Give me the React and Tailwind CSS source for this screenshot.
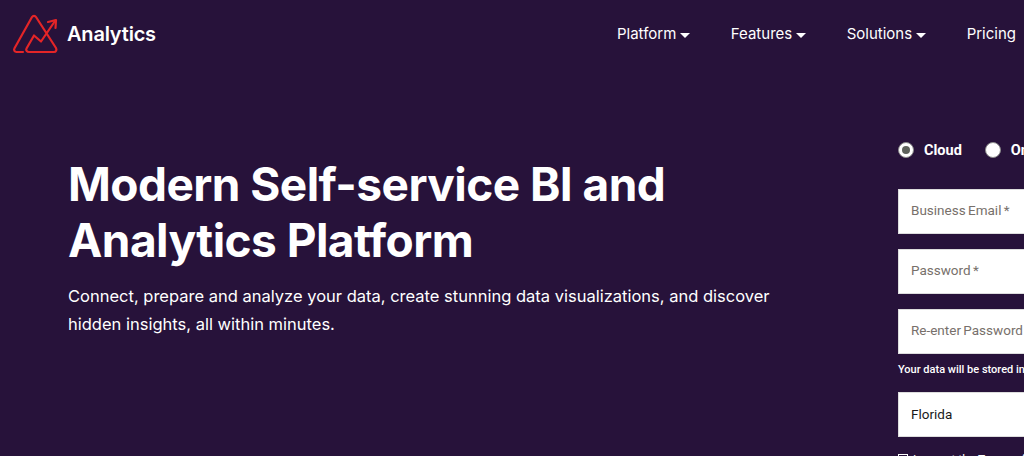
import React from 'react';

const navItems = [
    { label: 'Platform', caret: true },
    { label: 'Features', caret: true },
    { label: 'Solutions', caret: true },
    { label: 'Pricing', caret: false }
];

const Logo = () => (
    <svg width="46" height="44" viewBox="12 12 46 44" fill="none" stroke="#e42527" strokeWidth="2.2" strokeLinecap="round" strokeLinejoin="round" className="shrink-0">
        <path d="M23 52 H16.500 C14.500 52 13.500 50 14.500 48.300 L32 17 C33 15.400 35 15.400 36 17 L56 48 C57 50 56 52 54 52 H29 C27 52 25.500 50.300 26.500 48.500 L34 35.500 L41 41.500 L55 21" />
        <path d="M48 22 L56 20 L55.500 28" />
    </svg>
);

const Field = ({ placeholder, value }) => (
    <div className={`w-[200px] h-[45px] bg-white border border-[#ddd] flex items-center pl-[12px] text-[13.5px] whitespace-nowrap font-['Roboto',sans-serif] ${value ? 'text-[#1a1a1a]' : 'text-[#77706b] pb-[2px] [word-spacing:-1px]'}`}>
        {value || placeholder}
    </div>
);

const Radio = ({ checked, label }) => (
    <div className="flex items-center">
        <span className="w-[16px] h-[16px] rounded-full bg-white border border-[#8a8a8a] flex items-center justify-center">
            {checked && <span className="w-[8px] h-[8px] rounded-full bg-[#5e625c]"></span>}
        </span>
        <span className="ml-[10px] mt-[1px] text-[14.5px] font-bold text-white font-['Roboto',sans-serif]">{label}</span>
    </div>
);

const App = () => {
    return (
        <div className="w-[1024px] h-[456px] overflow-hidden bg-[#27123a] font-['Inter',sans-serif] text-white">
            {/* Header */}
            <header className="h-[68px] flex items-center pl-[12px] pr-[8px]">
                <Logo />
                <span className="ml-[9px] text-[20px] font-semibold tracking-[-0.2px]">Analytics</span>
                <nav className="ml-auto flex gap-[40.5px] text-[15px] whitespace-nowrap">
                    {navItems.map((item) => (
                        <span key={item.label} className="flex items-center">
                            {item.label}
                            {item.caret && <span className="ml-[4px] mt-[2px] border-x-[5px] border-x-transparent border-t-[5px] border-t-white"></span>}
                        </span>
                    ))}
                </nav>
            </header>

            <main className="flex">
                {/* Hero */}
                <section className="w-[898px] shrink-0 pl-[68px] pt-[88px]">
                    <h1 className="text-[46px] leading-[56px] font-bold tracking-[-0.55px]">
                        Modern Self-service BI and<br />Analytics Platform
                    </h1>
                    <p className="mt-[14px] text-[16.5px] leading-[28px]">
                        Connect, prepare and analyze your data, create stunning data visualizations, and discover<br />
                        hidden insights, all within minutes.
                    </p>
                </section>

                {/* Sign up form */}
                <section className="w-[200px] shrink-0 pt-[73px]">
                    <div className="flex gap-[23px] h-[18px] items-center whitespace-nowrap">
                        <Radio checked label="Cloud" />
                        <Radio label="On-premise" />
                    </div>
                    <div className="mt-[30px] flex flex-col gap-[15px]">
                        <Field placeholder="Business Email *" />
                        <Field placeholder="Password *" />
                        <Field placeholder="Re-enter Password *" />
                    </div>
                    <p className="mt-[8px] h-[15px] text-[11px] leading-[15px] font-medium whitespace-nowrap font-['Roboto',sans-serif]">Your data will be stored in the US data center.</p>
                    <div className="mt-[15px]">
                        <Field value="Florida" />
                    </div>
                    <div className="mt-[17px] flex items-start whitespace-nowrap text-[12px] leading-none font-['Roboto',sans-serif]">
                        <span className="w-[10px] h-[10px] border border-white"></span>
                        <span className="ml-[5px]">I accept the Terms of Service</span>
                    </div>
                </section>
            </main>
        </div>
    );
};

export default App;
